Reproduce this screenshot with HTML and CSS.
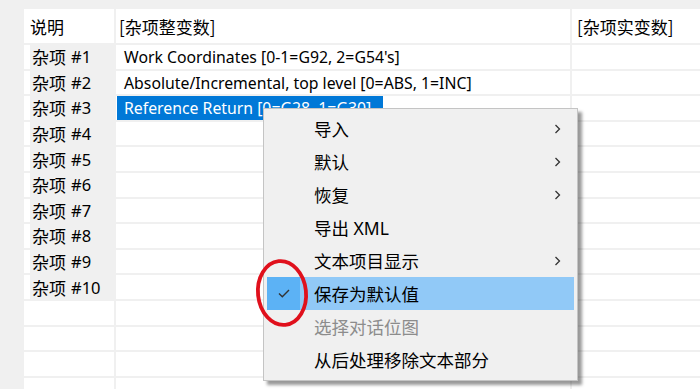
FILE: index.html
```html
<!DOCTYPE html>
<html lang="zh-CN">
<head>
  <meta charset="UTF-8" />
  <title>杂项变数</title>
  <link rel="stylesheet" href="styles.css">
</head>
<body>

  <div class="sheet">
    <div class="cell head">说明</div>
    <div class="cell head col2">[杂项整变数]</div>
    <div class="cell head col3">[杂项实变数]</div>

    <div class="cell label">杂项 <span class="num">#1</span></div>
    <div class="cell data"><span class="val">Work Coordinates [0-1=G92, 2=G54's]</span></div>
    <div class="cell"></div>

    <div class="cell label">杂项 <span class="num">#2</span></div>
    <div class="cell data"><span class="val">Absolute/Incremental, top level [0=ABS, 1=INC]</span></div>
    <div class="cell"></div>

    <div class="cell label">杂项 <span class="num">#3</span></div>
    <div class="cell data"><span class="val selected">Reference Return [0=G28, 1=G30]</span></div>
    <div class="cell"></div>

    <div class="cell label">杂项 <span class="num">#4</span></div>
    <div class="cell data"></div>
    <div class="cell"></div>

    <div class="cell label">杂项 <span class="num">#5</span></div>
    <div class="cell data"></div>
    <div class="cell"></div>

    <div class="cell label">杂项 <span class="num">#6</span></div>
    <div class="cell data"></div>
    <div class="cell"></div>

    <div class="cell label">杂项 <span class="num">#7</span></div>
    <div class="cell data"></div>
    <div class="cell"></div>

    <div class="cell label">杂项 <span class="num">#8</span></div>
    <div class="cell data"></div>
    <div class="cell"></div>

    <div class="cell label">杂项 <span class="num">#9</span></div>
    <div class="cell data"></div>
    <div class="cell"></div>

    <div class="cell label">杂项 <span class="num">#10</span></div>
    <div class="cell data"></div>
    <div class="cell"></div>

    <div class="cell"></div><div class="cell"></div><div class="cell"></div>
    <div class="cell"></div><div class="cell"></div><div class="cell"></div>
    <div class="cell"></div><div class="cell"></div><div class="cell"></div>
    <div class="cell"></div><div class="cell"></div><div class="cell"></div>
  </div>

  <div class="menu">
    <div class="item"><span class="text">导入</span><span class="arrow"><svg width="7" height="10" viewBox="0 0 7 10"><path d="M1.5 1 L5.5 5 L1.5 9" fill="none" stroke="#333" stroke-width="1.3"/></svg></span></div>
    <div class="item"><span class="text">默认</span><span class="arrow"><svg width="7" height="10" viewBox="0 0 7 10"><path d="M1.5 1 L5.5 5 L1.5 9" fill="none" stroke="#333" stroke-width="1.3"/></svg></span></div>
    <div class="item"><span class="text">恢复</span><span class="arrow"><svg width="7" height="10" viewBox="0 0 7 10"><path d="M1.5 1 L5.5 5 L1.5 9" fill="none" stroke="#333" stroke-width="1.3"/></svg></span></div>
    <div class="item"><span class="text">导出 XML</span></div>
    <div class="item"><span class="text">文本项目显示</span><span class="arrow"><svg width="7" height="10" viewBox="0 0 7 10"><path d="M1.5 1 L5.5 5 L1.5 9" fill="none" stroke="#333" stroke-width="1.3"/></svg></span></div>
    <div class="item hover">
      <span class="check"><svg width="12" height="9" viewBox="0 0 12 9"><path d="M1 4.5 L4.3 7.8 L11 1" fill="none" stroke="#333" stroke-width="1.4"/></svg></span>
      <span class="text">保存为默认值</span>
    </div>
    <div class="item disabled"><span class="text">选择对话位图</span></div>
    <div class="item"><span class="text">从后处理移除文本部分</span></div>
  </div>

  <svg class="circle" width="60" height="72" viewBox="0 0 60 72">
    <ellipse cx="29" cy="36" rx="24" ry="32" fill="none" stroke="#e0101c" stroke-width="3.8" transform="rotate(-6 29 36)"/>
  </svg>

</body>
</html>
```

FILE: styles.css
```css
body {
  margin: 0;
  background-color: #f0f0f0;
  font-family: "Noto Sans", "Noto Sans CJK SC", sans-serif;
  color: #000;
  width: 700px;
  height: 389px;
  overflow: hidden;
  position: relative;
}

.sheet {
  margin: 9px 0 0 24px;
  display: grid;
  grid-template-columns: 90px 454px 1fr;
  grid-template-rows: 34px;
  grid-auto-rows: 23.6px;
  gap: 2px;
}

.cell {
  background-color: #fff;
  display: flex;
  align-items: center;
  white-space: nowrap;
  overflow: hidden;
}

.head {
  font-family: "Noto Sans CJK SC", sans-serif;
  font-size: 17px;
  padding-left: 6px;
}

.head.col2 {
  padding-left: 3px;
}

.head.col3 {
  padding-left: 5px;
}

.label {
  background-color: #f0f0f0;
  border-left: 6px solid #fff;
  padding-left: 2px;
  font-family: "Noto Sans CJK SC", sans-serif;
  font-size: 17px;
}

.num {
  font-family: "Noto Sans", sans-serif;
  font-size: 16.5px;
  margin-left: 5px;
}

.data {
  padding-left: 1px;
  align-items: stretch;
}

.val {
  display: flex;
  align-items: center;
  padding: 1px 7px 0;
  font-size: 15.8px;
}

.val.selected {
  background-color: #0078d7;
  color: #fff;
  padding-right: 12px;
}

.menu {
  position: absolute;
  left: 263px;
  top: 108px;
  width: 315px;
  height: 273px;
  box-sizing: border-box;
  padding: 3px;
  background-color: #f0f0f0;
  border: 1px solid #c4c4c4;
  box-shadow: 4px 4px 3px rgba(0, 0, 0, 0.4);
  font-family: "Noto Sans", "Noto Sans CJK SC", sans-serif;
  font-size: 17.5px;
}

.item {
  height: 33px;
  display: grid;
  grid-template-columns: 33px 1fr 34px;
  align-items: center;
}

.item .text {
  grid-column: 2;
  padding-left: 14px;
}

.item .arrow {
  grid-column: 3;
  display: flex;
  justify-content: center;
}

.item .check {
  grid-column: 1;
  height: 100%;
  display: flex;
  align-items: center;
  justify-content: center;
  background-color: #5cb2f5;
}

.item.hover {
  background-color: #91c9f7;
}

.item.disabled {
  color: #8c8c8c;
}

.circle {
  position: absolute;
  left: 253px;
  top: 257px;
}
```
